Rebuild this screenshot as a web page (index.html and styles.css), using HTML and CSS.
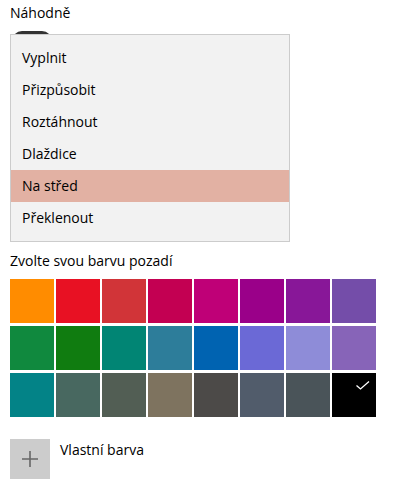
FILE: index.html
```html
<!DOCTYPE html>
<html lang="cs">
<head>
<meta charset="utf-8">
<link rel="stylesheet" href="styles.css">
</head>
<body>
<div class="page">
  <div class="title">Náhodně</div>
  <div class="toggle"></div>
  <ul class="menu">
    <li class="item">Vyplnit</li>
    <li class="item">Přizpůsobit</li>
    <li class="item">Roztáhnout</li>
    <li class="item">Dlaždice</li>
    <li class="item selected">Na střed</li>
    <li class="item">Překlenout</li>
  </ul>
  <div class="label">Zvolte svou barvu pozadí</div>
  <div class="grid">
    <div class="sw" style="background:#FF8C00"></div>
    <div class="sw" style="background:#E81123"></div>
    <div class="sw" style="background:#D13438"></div>
    <div class="sw" style="background:#C30052"></div>
    <div class="sw" style="background:#BF0077"></div>
    <div class="sw" style="background:#9A0089"></div>
    <div class="sw" style="background:#881798"></div>
    <div class="sw" style="background:#744DA9"></div>
    <div class="sw" style="background:#10893E"></div>
    <div class="sw" style="background:#107C10"></div>
    <div class="sw" style="background:#018574"></div>
    <div class="sw" style="background:#2D7D9A"></div>
    <div class="sw" style="background:#0063B1"></div>
    <div class="sw" style="background:#6B69D6"></div>
    <div class="sw" style="background:#8E8CD8"></div>
    <div class="sw" style="background:#8764B8"></div>
    <div class="sw" style="background:#038387"></div>
    <div class="sw" style="background:#486860"></div>
    <div class="sw" style="background:#525E54"></div>
    <div class="sw" style="background:#7E735F"></div>
    <div class="sw" style="background:#4C4A48"></div>
    <div class="sw" style="background:#515C6B"></div>
    <div class="sw" style="background:#4A5459"></div>
    <div class="sw sw-selected" style="background:#000000">
      <svg class="check" width="16" height="12" viewBox="0 0 16 12"><path d="M1.5 5.5 L5.5 9 L14 1.5" fill="none" stroke="#fff" stroke-width="1.3"/></svg>
    </div>
  </div>
  <div class="custom">
    <div class="plus">
      <svg width="16" height="16" viewBox="0 0 16 16"><path d="M8 0 V16 M0 8 H16" stroke="#666" stroke-width="1.6" fill="none"/></svg>
    </div>
    <div class="custom-text">Vlastní barva</div>
  </div>
</div>
</body>
</html>
```
FILE: styles.css
```css
html, body {
  margin: 0;
  padding: 0;
  background: #fff;
}
body {
  font-family: "Open Sans", "Noto Sans", sans-serif;
  font-size: 14px;
  color: #000;
}
.page {
  padding-left: 10px;
}
.title {
  line-height: 20px;
  margin-top: 3px;
}
.toggle {
  width: 40px;
  height: 20px;
  border-radius: 10px;
  background: #333;
  margin-top: 8px;
  margin-left: 2px;
}
.menu {
  position: relative;
  list-style: none;
  margin: -17px 0 0 0;
  padding: 7px 0;
  width: 278px;
  background: #f2f2f2;
  border: 1px solid #cccccc;
}
.item {
  height: 32px;
  line-height: 32px;
  padding-left: 11px;
}
.item.selected {
  background: #e2b1a3;
}
.label {
  margin-top: 9px;
  line-height: 20px;
}
.grid {
  margin-top: 8px;
  display: grid;
  grid-template-columns: repeat(8, 44px);
  grid-auto-rows: 44px;
  column-gap: 2px;
  row-gap: 3px;
}
.sw {
  position: relative;
}
.check {
  position: absolute;
  left: 23px;
  top: 7px;
}
.custom {
  margin-top: 22px;
  display: flex;
  align-items: flex-start;
  gap: 10px;
}
.plus {
  width: 40px;
  height: 40px;
  background: #cccccc;
  display: flex;
  align-items: center;
  justify-content: center;
}
.custom-text {
  margin-top: 1px;
  line-height: 20px;
}
```
